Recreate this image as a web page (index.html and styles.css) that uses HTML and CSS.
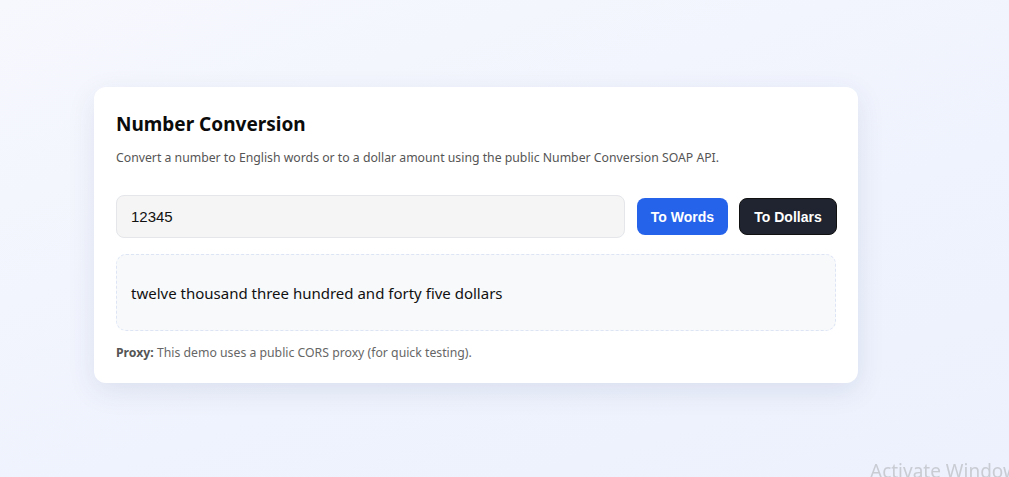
FILE: index.html
```html
<!DOCTYPE html>
<html>
<head>
<meta charset="utf-8">
<link rel="stylesheet" href="styles.css">
</head>
<body>
<main class="page">
  <section class="card">
    <h1 class="title">Number Conversion</h1>
    <p class="subtitle">Convert a number to English words or to a dollar amount using the public Number Conversion SOAP API.</p>
    <div class="controls">
      <input class="num-input" type="text" value="12345">
      <button class="btn btn-blue">To Words</button>
      <button class="btn btn-dark">To Dollars</button>
    </div>
    <div class="result">twelve thousand three hundred and forty five dollars</div>
    <p class="note"><strong>Proxy:</strong> This demo uses a public CORS proxy (for quick testing).</p>
  </section>
</main>
<div class="watermark">Activate Windows</div>
</body>
</html>
```

FILE: styles.css
```css
html, body {
  margin: 0;
  height: 100%;
}
body {
  background: linear-gradient(160deg, #f7f8fe 0%, #eff3fd 60%, #edf1fd 100%);
  font-family: "Noto Sans", "Open Sans", sans-serif;
  overflow: hidden;
}
.page {
  padding: 87px 0 0 94px;
}
.card {
  width: 764px;
  box-sizing: border-box;
  background: #fff;
  border-radius: 12px;
  padding: 24px 21px 21px 22px;
  box-shadow: 0 8px 28px rgba(40, 60, 120, 0.10);
}
.title {
  margin: 0;
  font-size: 19px;
  font-weight: 700;
  color: #0b0b0b;
  line-height: 26px;
}
.subtitle {
  margin: 12px 0 0;
  font-size: 12.25px;
  color: #555;
  line-height: 18px;
}
.controls {
  display: flex;
  align-items: center;
  gap: 11px;
  margin-top: 28px;
}
.num-input {
  flex: 1;
  min-width: 0;
  height: 43px;
  box-sizing: border-box;
  border: 1px solid #e4e6ea;
  background: #f5f5f5;
  border-radius: 8px;
  padding: 0 14px;
  font-family: "Liberation Sans", Arial, sans-serif;
  font-size: 15px;
  color: #111;
  margin-right: 1px;
}
.btn {
  flex: none;
  height: 37px;
  border-radius: 8px;
  border: none;
  font-family: "Liberation Sans", Arial, sans-serif;
  font-weight: 700;
  font-size: 14px;
  color: #fff;
  padding: 0;
  white-space: nowrap;
}
.btn-blue {
  background: #2563eb;
  width: 91px;
}
.btn-dark {
  background: #1f2430;
  border: 1px solid #111;
  width: 98px;
}
.result {
  margin-top: 16px;
  margin-right: 1px;
  height: 77px;
  box-sizing: border-box;
  border: 1px dashed #dde5f5;
  background: #f8f9fb;
  border-radius: 10px;
  padding: 0 14px;
  display: flex;
  align-items: center;
  font-size: 15px;
  color: #111;
}
.note {
  margin: 13px 0 0;
  font-size: 12.25px;
  color: #666;
  line-height: 18px;
}
.note strong {
  color: #555;
}
.watermark {
  position: fixed;
  left: 870px;
  top: 458px;
  font-family: "Noto Sans", sans-serif;
  font-size: 19px;
  color: #c9ccd3;
  white-space: nowrap;
}
```
